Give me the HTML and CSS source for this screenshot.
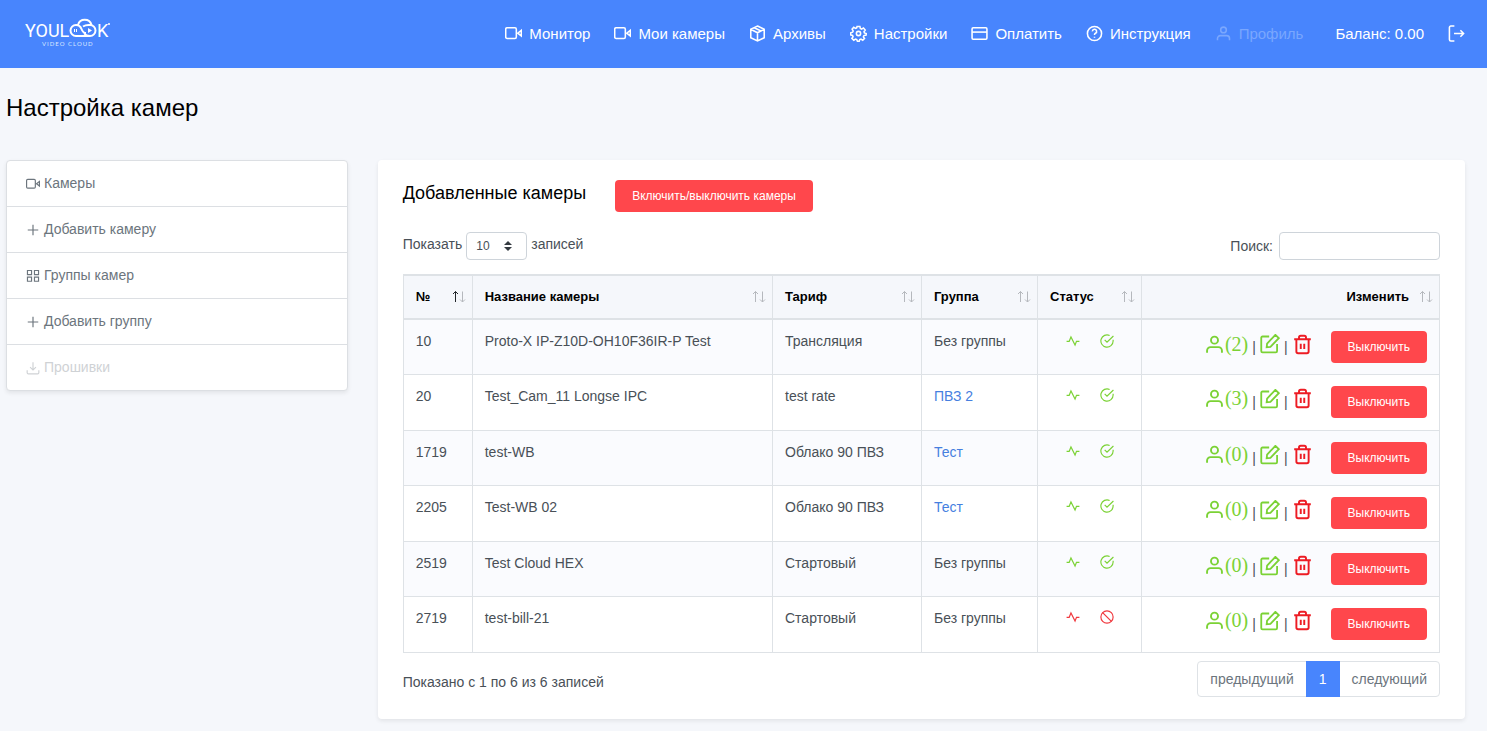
FILE: index.html
```html
<!DOCTYPE html>
<html lang="ru">
<head>
<meta charset="utf-8">
<title>Настройка камер</title>
<link rel="stylesheet" href="styles.css">
</head>
<body>
<svg class="sprite" aria-hidden="true">
  <symbol id="video" viewBox="0 0 24 24"><rect x="1" y="4" width="15" height="15" rx="2"/><path d="M23 7.500l-5 4 5 4z"/></symbol>
  <symbol id="box" viewBox="0 0 24 24"><path d="M12 1.500l9.500 4.500v12L12 22.500 2.500 18V6zM2.500 6l9.500 5 9.500-5M12 11v11M7.500 3.800l9.500 4.700"/></symbol>
  <symbol id="gear" viewBox="0 0 24 24"><circle cx="12" cy="12" r="3"/><path d="M10 2h4l.6 3 1.800.8L19 4.100 21.500 7l-1.700 2.500.5 1.700L23 12l-.3 2.200-3 .7-.8 1.800L20.500 19 18 21.500l-2.500-1.600-1.700.6L13 23h-2.500l-1-2.500-1.600-.7L5.300 21.400 2.700 19l1.600-2.500-.7-1.700L1 14v-3l2.700-.8.8-1.700L3 5.800 5.300 3.300l2.500 1.500L9.400 4z"/></symbol>
  <symbol id="card" viewBox="0 0 24 24"><rect x="1.500" y="4" width="21" height="16" rx="1.500"/><path d="M1.500 10h21"/></symbol>
  <symbol id="help" viewBox="0 0 24 24"><circle cx="12" cy="12" r="10"/><path d="M9 9a3 3 0 1 1 4.300 2.700Q12 12.400 12 14M12 16.500v1.500"/></symbol>
  <symbol id="user" viewBox="0 0 24 24"><circle cx="12" cy="7" r="4"/><path d="M3.500 21.500V19a4 4 0 0 1 4-4h9a4 4 0 0 1 4 4v2.500"/></symbol>
  <symbol id="logout" viewBox="0 0 24 24"><path d="M9 1.500H4a2 2 0 0 0-2 2v17a2 2 0 0 0 2 2h5M8.500 12H22M17.500 7.500L22 12l-4.500 4.500"/></symbol>
  <symbol id="plus" viewBox="0 0 24 24"><path d="M12 3v18M3 12h18"/></symbol>
  <symbol id="grid" viewBox="0 0 24 24"><path d="M2.500 2.500h7v7h-7zM14.500 2.500h7v7h-7zM2.500 14h7v7h-7zM14.500 14h7v7h-7z"/></symbol>
  <symbol id="download" viewBox="0 0 24 24"><path d="M2 16v4a2 2 0 0 0 2 2h16a2 2 0 0 0 2-2v-4M12 2v13M7 10.500l5 5 5-5"/></symbol>
  <symbol id="pulse" viewBox="0 0 24 24"><path d="M23 12.500h-5l-2.500 6.500-7-14-3 7.500H1"/></symbol>
  <symbol id="check" viewBox="0 0 24 24"><path d="M22.500 10v2a10.500 10.500 0 1 1-6-9.500M23 3.500L12 14l-4-4"/></symbol>
  <symbol id="ban" viewBox="0 0 24 24"><circle cx="12" cy="12" r="10.500"/><path d="M4.500 4.500l15 15"/></symbol>
  <symbol id="edit" viewBox="0 0 24 24"><path d="M11 3H3a1.500 1.500 0 0 0-1.500 1.500v16A1.500 1.500 0 0 0 3 22h16a1.500 1.500 0 0 0 1.500-1.500V12M18.500 1L22.500 5 12.500 15.500 8 16l.5-4.500z"/></symbol>
  <symbol id="trash" viewBox="0 0 24 24"><path d="M2.500 6h19M5 6v14a2 2 0 0 0 2 2h10a2 2 0 0 0 2-2V6M8 6V4a2 2 0 0 1 2-2h4a2 2 0 0 1 2 2v2M10 11v6M14 11v6"/></symbol>
  <symbol id="sort" viewBox="0 0 14 14"><path class="up" d="M3.500 12V1.500M1 4l2.500-2.500L6 4"/><path class="down" d="M10.500 1.500V12M8 9.500l2.500 2.500L13 9.500"/></symbol>
  <symbol id="sort-asc" viewBox="0 0 14 14"><path stroke="#212529" d="M3.500 12V1.500M1 4l2.500-2.500L6 4"/><path d="M10.500 1.500V12M8 9.500l2.500 2.500L13 9.500"/></symbol>
</svg>

<header class="topbar">
  <a class="logo" href="#" aria-label="YouLook Video Cloud">
    <svg width="88" height="30" viewBox="0 0 88 30">
      <text class="logo-word" x="0" y="19">YOUL</text>
      <text class="logo-word" x="72" y="19">K</text>
      <text class="logo-sub" x="17" y="28">VIDEO CLOUD</text>
      <path class="logo-cloud" d="M65 18H51a5.500 5.500 0 0 1 0-11q4 0 5.500 4t4.500 4M53 7a7 7 0 0 1 13.500 0M58 8.500q3-2 7-1.500a5.500 5.500 0 0 1 0 11q-4 0-6-3"/>
      <path class="logo-play" d="M63 10l4 2.500-4 2.500zM49 11h1v3h-1zM51 11h1v3h-1z"/>
      <circle class="logo-play" cx="84" cy="6" r="1"/>
    </svg>
  </a>
  <nav class="menu">
    <a href="#"><svg class="icon"><use href="#video"/></svg>Монитор</a>
    <a href="#"><svg class="icon"><use href="#video"/></svg>Мои камеры</a>
    <a href="#"><svg class="icon"><use href="#box"/></svg>Архивы</a>
    <a href="#"><svg class="icon"><use href="#gear"/></svg>Настройки</a>
    <a href="#"><svg class="icon"><use href="#card"/></svg>Оплатить</a>
    <a href="#"><svg class="icon"><use href="#help"/></svg>Инструкция</a>
    <a class="disabled" aria-disabled="true" href="#"><svg class="icon"><use href="#user"/></svg>Профиль</a>
  </nav>
  <span class="balance">Баланс: 0.00</span>
  <a class="logout" href="#" aria-label="Выйти"><svg class="icon"><use href="#logout"/></svg></a>
</header>

<main class="page">
  <h1>Настройка камер</h1>
  <div class="columns">
    <nav class="side">
      <a href="#"><svg class="icon"><use href="#video"/></svg>Камеры</a>
      <a href="#"><svg class="icon"><use href="#plus"/></svg>Добавить камеру</a>
      <a href="#"><svg class="icon"><use href="#grid"/></svg>Группы камер</a>
      <a href="#"><svg class="icon"><use href="#plus"/></svg>Добавить группу</a>
      <a class="disabled" aria-disabled="true" href="#"><svg class="icon"><use href="#download"/></svg>Прошивки</a>
    </nav>

    <section class="card">
      <div class="card-head">
        <h2>Добавленные камеры</h2>
        <button class="btn" type="button">Включить/выключить камеры</button>
      </div>
      <div class="tools">
        <div class="length">
          <label for="length">Показать</label>
          <span class="select"><select id="length"><option>10</option><option>25</option><option>50</option></select><svg viewBox="0 0 8 10"><path d="M0 4l4-4 4 4zM0 6l4 4 4-4z"/></svg></span>
          <span>записей</span>
        </div>
        <div class="search"><label for="search">Поиск:</label><input id="search" type="search"></div>
      </div>

      <table>
        <colgroup><col class="c-id"><col><col class="c-rate"><col class="c-group"><col class="c-state"><col class="c-edit"></colgroup>
        <thead>
          <tr>
            <th><div class="th">№<svg class="sort"><use href="#sort-asc"/></svg></div></th>
            <th><div class="th">Название камеры<svg class="sort"><use href="#sort"/></svg></div></th>
            <th><div class="th">Тариф<svg class="sort"><use href="#sort"/></svg></div></th>
            <th><div class="th">Группа<svg class="sort"><use href="#sort"/></svg></div></th>
            <th><div class="th">Статус<svg class="sort"><use href="#sort"/></svg></div></th>
            <th><div class="th end">Изменить<svg class="sort"><use href="#sort"/></svg></div></th>
          </tr>
        </thead>
        <tbody>
          <tr><td>10</td><td>Proto-X IP-Z10D-OH10F36IR-P Test</td><td>Трансляция</td><td>Без группы</td>
            <td><div class="state"><svg class="icon"><use href="#pulse"/></svg><svg class="icon"><use href="#check"/></svg></div></td>
            <td><div class="actions"><a class="users" href="#"><svg class="icon"><use href="#user"/></svg>(2)</a><span class="bar">|</span><a class="edit" href="#" aria-label="Изменить"><svg class="icon"><use href="#edit"/></svg></a><span class="bar">|</span><a class="remove" href="#" aria-label="Удалить"><svg class="icon"><use href="#trash"/></svg></a><button class="btn" type="button">Выключить</button></div></td></tr>
          <tr><td>20</td><td>Test_Cam_11 Longse IPC</td><td>test rate</td><td><a href="#">ПВЗ 2</a></td>
            <td><div class="state"><svg class="icon"><use href="#pulse"/></svg><svg class="icon"><use href="#check"/></svg></div></td>
            <td><div class="actions"><a class="users" href="#"><svg class="icon"><use href="#user"/></svg>(3)</a><span class="bar">|</span><a class="edit" href="#" aria-label="Изменить"><svg class="icon"><use href="#edit"/></svg></a><span class="bar">|</span><a class="remove" href="#" aria-label="Удалить"><svg class="icon"><use href="#trash"/></svg></a><button class="btn" type="button">Выключить</button></div></td></tr>
          <tr><td>1719</td><td>test-WB</td><td>Облако 90 ПВЗ</td><td><a href="#">Тест</a></td>
            <td><div class="state"><svg class="icon"><use href="#pulse"/></svg><svg class="icon"><use href="#check"/></svg></div></td>
            <td><div class="actions"><a class="users" href="#"><svg class="icon"><use href="#user"/></svg>(0)</a><span class="bar">|</span><a class="edit" href="#" aria-label="Изменить"><svg class="icon"><use href="#edit"/></svg></a><span class="bar">|</span><a class="remove" href="#" aria-label="Удалить"><svg class="icon"><use href="#trash"/></svg></a><button class="btn" type="button">Выключить</button></div></td></tr>
          <tr><td>2205</td><td>Test-WB 02</td><td>Облако 90 ПВЗ</td><td><a href="#">Тест</a></td>
            <td><div class="state"><svg class="icon"><use href="#pulse"/></svg><svg class="icon"><use href="#check"/></svg></div></td>
            <td><div class="actions"><a class="users" href="#"><svg class="icon"><use href="#user"/></svg>(0)</a><span class="bar">|</span><a class="edit" href="#" aria-label="Изменить"><svg class="icon"><use href="#edit"/></svg></a><span class="bar">|</span><a class="remove" href="#" aria-label="Удалить"><svg class="icon"><use href="#trash"/></svg></a><button class="btn" type="button">Выключить</button></div></td></tr>
          <tr><td>2519</td><td>Test Cloud HEX</td><td>Стартовый</td><td>Без группы</td>
            <td><div class="state"><svg class="icon"><use href="#pulse"/></svg><svg class="icon"><use href="#check"/></svg></div></td>
            <td><div class="actions"><a class="users" href="#"><svg class="icon"><use href="#user"/></svg>(0)</a><span class="bar">|</span><a class="edit" href="#" aria-label="Изменить"><svg class="icon"><use href="#edit"/></svg></a><span class="bar">|</span><a class="remove" href="#" aria-label="Удалить"><svg class="icon"><use href="#trash"/></svg></a><button class="btn" type="button">Выключить</button></div></td></tr>
          <tr><td>2719</td><td>test-bill-21</td><td>Стартовый</td><td>Без группы</td>
            <td><div class="state off"><svg class="icon"><use href="#pulse"/></svg><svg class="icon"><use href="#ban"/></svg></div></td>
            <td><div class="actions"><a class="users" href="#"><svg class="icon"><use href="#user"/></svg>(0)</a><span class="bar">|</span><a class="edit" href="#" aria-label="Изменить"><svg class="icon"><use href="#edit"/></svg></a><span class="bar">|</span><a class="remove" href="#" aria-label="Удалить"><svg class="icon"><use href="#trash"/></svg></a><button class="btn" type="button">Выключить</button></div></td></tr>
        </tbody>
      </table>

      <div class="foot">
        <span>Показано с 1 по 6 из 6 записей</span>
        <div class="pager">
          <a href="#">предыдущий</a><a class="current" href="#">1</a><a href="#">следующий</a>
        </div>
      </div>
    </section>
  </div>
</main>
</body>
</html>
```

FILE: styles.css
```css
* { box-sizing: border-box; }

body {
  margin: 0;
  background: #f5f7fb;
  color: #495057;
  font: 14px/21px "Liberation Sans", Arial, sans-serif;
}

a { color: #467fdf; text-decoration: none; }
h1, h2 { margin: 0; color: #000; font-weight: 400; }

.sprite { display: none; }
.icon {
  width: 14px;
  height: 14px;
  flex: none;
  overflow: visible;
  fill: none;
  stroke: currentColor;
  stroke-width: 2;
}

.topbar {
  display: flex;
  align-items: center;
  height: 68px;
  padding: 0 22px 2px 25px;
  background: #4885fd;
  color: #fff;
  font-size: 15px;
}
.topbar a { color: #fff; }
.topbar .icon { width: 17px; height: 17px; stroke-width: 2.2; }
.logo { margin-right: auto; line-height: 0; }
.logo-word { fill: #fff; font: 18px Roboto, sans-serif; }
.logo-sub { fill: #dbe7ff; font: 6px Lato, sans-serif; letter-spacing: 1px; }
.logo-cloud { fill: none; stroke: #fff; stroke-width: 2; }
.logo-play { fill: #fff; }
.menu { display: flex; gap: 24px; }
.menu a { display: flex; align-items: center; gap: 7px; }
.topbar .disabled { color: #7aa7fe; }
.balance { margin: 0 24px 0 32px; }
.logout { display: flex; }

.page { padding: 24px 22px 12px 6px; }
h1 { font-size: 24px; line-height: 32px; }
.columns {
  display: grid;
  grid-template-columns: 22fr 70fr;
  gap: 30px;
  align-items: start;
  margin-top: 36px;
}

.side {
  border: 1px solid #dcdfe3;
  border-radius: 4px;
  background: #fff;
  box-shadow: 0 2px 4px rgba(0, 0, 0, .08);
}
.side a {
  display: flex;
  align-items: center;
  gap: 4px;
  padding: 12px 19px;
  color: #6c757d;
}
.side a + a { border-top: 1px solid #dcdfe3; }
.side .disabled { color: #cfd2d5; }

.card {
  padding: 20px 25px 22px;
  border-radius: 4px;
  background: #fff;
  box-shadow: 0 2px 4px rgba(0, 0, 0, .08);
}
.card-head { display: flex; gap: 29px; align-items: flex-start; }
h2 { font-size: 18px; line-height: 26px; }

.btn {
  height: 32px;
  padding: 0 17px;
  border: 0;
  border-radius: 4px;
  background: #ff474c;
  color: #fff;
  font: 12px "Liberation Sans", Arial, sans-serif;
}

.tools { display: flex; justify-content: space-between; margin: 20px 0 14px; }
.length { display: flex; gap: 4px; align-items: flex-start; line-height: 24px; }
.select { display: grid; align-items: center; }
.select > * { grid-area: 1 / 1; }
.select svg { width: 8px; height: 10px; margin-right: 15px; justify-self: end; fill: #343a40; pointer-events: none; }
select, input {
  height: 28px;
  border: 1px solid #ced4da;
  border-radius: 4px;
  background: #fff;
  color: #495057;
  font: 12px "Liberation Sans", Arial, sans-serif;
}
select { appearance: none; width: 61px; padding: 0 9px; }
.search { display: flex; gap: 6px; align-items: center; }
input { width: 161px; padding: 0 8px; }

table { width: 100%; border-collapse: collapse; table-layout: fixed; }
.c-id { width: 69px; }
.c-rate { width: 149px; }
.c-group { width: 116px; }
.c-state { width: 104px; }
.c-edit { width: 298px; }
th, td { padding: 11px 12px 10px; border: 1px solid #dee2e6; text-align: left; vertical-align: top; }
th {
  padding: 10px 6px 11px 12px;
  border-top-width: 2px;
  border-bottom-width: 2px;
  background: #f5f7fb;
  color: #000;
  font-size: 13px;
  font-weight: 700;
}
.th { display: flex; justify-content: space-between; align-items: center; }
.th.end { justify-content: flex-end; gap: 10px; }
.sort { width: 14px; height: 14px; fill: none; stroke: #b5b8bd; }
tbody tr { height: 56px; }
tbody tr:nth-child(odd) { height: 55px; background: #fafbfe; }

.state { display: flex; gap: 20px; justify-content: center; align-items: center; height: 19px; color: #7bd235; }
.state.off { color: #f0383e; }
.actions { display: flex; align-items: flex-start; justify-content: flex-end; }
.actions .icon { width: 21px; height: 21px; stroke-width: 2.200; }
.actions a { display: flex; align-items: center; height: 26px; }
.actions .bar { margin: 0 4px; line-height: 32px; }
.actions .users { color: #7bd235; font: 20px "Liberation Serif", serif; }
.actions .edit { color: #7bd235; }
.actions .edit .icon { width: 20px; height: 20px; }
.actions .remove { margin-right: 18px; color: #ed1c24; }

.foot { display: flex; justify-content: space-between; align-items: flex-start; margin-top: 8px; }
.foot > span { padding-top: 11px; }
.pager { display: flex; border: 1px solid #dee2e6; border-radius: 4px; line-height: 34px; }
.pager a { padding: 0 12px; color: #6c757d; }
.pager .current { margin: -1px 0; padding: 1px 13px; background: #4885fd; color: #fff; }
```
